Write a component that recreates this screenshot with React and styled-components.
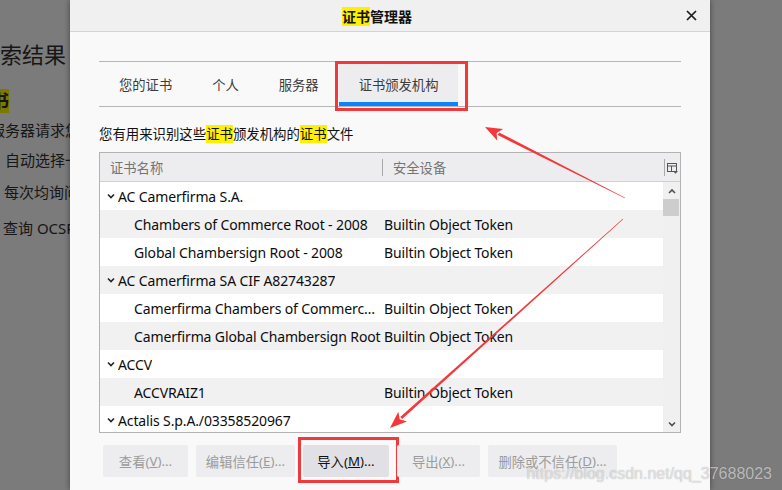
import React from "react";
import styled, { createGlobalStyle } from "styled-components";

const GlobalStyle = createGlobalStyle`
  html, body { margin: 0; padding: 0; }
  body {
    width: 782px;
    height: 490px;
    overflow: hidden;
    background: #7b7b7b;
    font-family: "Noto Sans", "Noto Sans CJK SC", sans-serif;
  }
`;

const rows = [
  { name: "AC Camerfirma S.A.", parent: true },
  { name: "Chambers of Commerce Root - 2008", device: "Builtin Object Token" },
  { name: "Global Chambersign Root - 2008", device: "Builtin Object Token" },
  { name: "AC Camerfirma SA CIF A82743287", parent: true },
  { name: "Camerfirma Chambers of Commerce Root", device: "Builtin Object Token" },
  { name: "Camerfirma Global Chambersign Root", device: "Builtin Object Token" },
  { name: "ACCV", parent: true },
  { name: "ACCVRAIZ1", device: "Builtin Object Token" },
  { name: "Actalis S.p.A./03358520967", parent: true },
];

const tabs = ["您的证书", "个人", "服务器", "证书颁发机构"];

const buttons = [
  { label: "查看", key: "V", w: 85 },
  { label: "编辑信任", key: "E", w: 99 },
  { label: "导入", key: "M", w: 86, enabled: true },
  { label: "导出", key: "X", w: 83 },
  { label: "删除或不信任", key: "D", w: 129 },
];

function arrow(x1, y1, x2, y2) {
  const dx = x2 - x1;
  const dy = y2 - y1;
  const len = Math.hypot(dx, dy);
  const ux = dx / len;
  const uy = dy / len;
  const nx = -uy;
  const ny = ux;
  const bx = x2 - ux * 15;
  const by = y2 - uy * 15;
  const p = (x, y) => `${x.toFixed(1)},${y.toFixed(1)}`;
  const shaft = [
    p(x1 + nx * 0.3, y1 + ny * 0.3),
    p(bx + nx * 1.5, by + ny * 1.5),
    p(bx - nx * 1.5, by - ny * 1.5),
    p(x1 - nx * 0.3, y1 - ny * 0.3),
  ].join(" ");
  const head = [
    p(x2, y2),
    p(bx - ux * 2 + nx * 6.5, by - uy * 2 + ny * 6.5),
    p(bx + ux * 2, by + uy * 2),
    p(bx - ux * 2 - nx * 6.5, by - uy * 2 - ny * 6.5),
  ].join(" ");
  return { shaft, head };
}

const Chevron = ({ up, color = "#222", w = 8 }) => (
  <svg width={w} height="6" viewBox="0 0 8 6">
    <polyline
      points={up ? "1,5 4,2 7,5" : "1,1.5 4,4.5 7,1.5"}
      fill="none"
      stroke={color}
      strokeWidth="1.6"
    />
  </svg>
);

const Arrows = () => {
  const a1 = arrow(625, 198, 485, 127);
  const a2 = arrow(623, 219, 390, 428);
  return (
    <Overlay width="782" height="490" viewBox="0 0 782 490">
      {[a1, a2].map((a, i) => (
        <g key={i} fill="#f2383b">
          <polygon points={a.shaft} />
          <polygon points={a.head} />
        </g>
      ))}
    </Overlay>
  );
};

export default function App() {
  return (
    <Page>
      <GlobalStyle />
      <BackPage>
        <BackTitle>搜索结果</BackTitle>
        <BackHeading>
          <Mark $dim>证书</Mark>
        </BackHeading>
        <BackLine $shift={-10}>服务器请求您的个人证书时</BackLine>
        <BackLine $shift={5} $top={10}>自动选择一个</BackLine>
        <BackLine $shift={4} $top={12}>每次均询问</BackLine>
        <BackLine $shift={3} $top={16}>查询 OCSP 响应服务器</BackLine>
      </BackPage>

      <Dialog>
        <TitleBar>
          <span />
          <Title>
            <Mark>证书</Mark>管理器
          </Title>
          <Close>
            <svg width="11" height="11" viewBox="0 0 11 11">
              <path d="M1 1L10 10M10 1L1 10" stroke="#1b1b1b" strokeWidth="1.7" />
            </svg>
          </Close>
        </TitleBar>

        <Body>
          <Tabs>
            {tabs.map((t, i) => (
              <Tab key={t} $selected={i === tabs.length - 1}>
                {t}
                {i === tabs.length - 1 && (
                  <RedBox $t={-1} $r={-10} $b={-5} $l={-4} />
                )}
              </Tab>
            ))}
          </Tabs>

          <Description>
            您有用来识别这些<Mark>证书</Mark>颁发机构的<Mark>证书</Mark>文件
          </Description>

          <Tree>
            <TreeHead>
              <HeadCell $w={282}>证书名称</HeadCell>
              <HeadDivider />
              <HeadCell $grow>安全设备</HeadCell>
              <HeadDivider />
              <Picker>
                <svg width="11" height="11" viewBox="0 0 11 11">
                  <rect x="0.5" y="0.5" width="9" height="8" fill="none" stroke="#555" />
                  <path d="M0.5 3H9.5M4.5 3V8.5" stroke="#555" />
                  <path d="M6 8H11L8.5 10.8Z" fill="#555" />
                </svg>
              </Picker>
            </TreeHead>
            <TreeBody>
              <RowList>
                {rows.map((r, i) => (
                  <Row key={r.name} $alt={i % 2 === 1}>
                    <NameCell $child={!r.parent}>
                      {r.parent && <Chevron />}
                      <Ellipsis>{r.name}</Ellipsis>
                    </NameCell>
                    <DeviceCell>{r.device}</DeviceCell>
                  </Row>
                ))}
              </RowList>
              <ScrollBar>
                <ScrollArrow>
                  <Chevron up color="#505050" />
                </ScrollArrow>
                <Thumb />
                <Track />
                <ScrollArrow>
                  <Chevron color="#505050" />
                </ScrollArrow>
              </ScrollBar>
            </TreeBody>
          </Tree>

          <Buttons>
            {buttons.map((b) => (
              <Button key={b.key} $w={b.w} $enabled={b.enabled}>
                {b.label}(<u>{b.key}</u>)...
                {b.enabled && <RedBox $t={-8} $r={-10} $b={-6} $l={-5} />}
              </Button>
            ))}
          </Buttons>
        </Body>
      </Dialog>

      <RightPage />
      <Arrows />
      <Watermark>https://blog.csdn.net/qq_37688023</Watermark>
    </Page>
  );
}

const Page = styled.div`
  position: relative;
  display: flex;
  width: 782px;
  height: 490px;
  overflow: hidden;
  background: #7b7b7b;
`;

const BackPage = styled.div`
  width: 70px;
  flex: none;
  overflow: hidden;
  white-space: nowrap;
  color: #161616;
  padding-top: 38px;
  box-sizing: border-box;
`;

const BackTitle = styled.div`
  font-size: 22px;
  line-height: 32px;
  margin-left: -22px;
`;

const BackHeading = styled.div`
  font-size: 18px;
  font-weight: 700;
  line-height: 22px;
  margin: 20px 0 0 -27px;
`;

const BackLine = styled.div`
  font-size: 15px;
  line-height: 20px;
  margin-top: ${(p) => p.$top ?? 8}px;
  margin-left: ${(p) => p.$shift}px;
`;

const Mark = styled.span`
  background: ${(p) => (p.$dim ? "#7d7800" : "#fff000")};
`;

const Dialog = styled.div`
  width: 640px;
  flex: none;
  background: #f9f9f9;
  display: flex;
  flex-direction: column;
  box-shadow: 0 0 6px rgba(0, 0, 0, 0.45);
  z-index: 1;
`;

const TitleBar = styled.div`
  height: 31px;
  background: #f0f0f0;
  border-bottom: 1px solid #d4d4d4;
  display: grid;
  grid-template-columns: 1fr auto 1fr;
  align-items: center;
`;

const Title = styled.div`
  margin-right: 26px;
  font-size: 14px;
  font-weight: 700;
  color: #111;
`;

const Close = styled.div`
  justify-self: end;
  padding-right: 13px;
  display: flex;
`;

const Body = styled.div`
  padding: 0 29px;
  display: flex;
  flex-direction: column;
`;

const Tabs = styled.div`
  margin-top: 29px;
  height: 44px;
  display: flex;
  border-top: 1px solid #b6b6b6;
  border-bottom: 1px solid #b6b6b6;
`;

const Tab = styled.div`
  position: relative;
  display: flex;
  align-items: center;
  padding: 0 20px;
  font-size: 13.3px;
  color: #3c3c3c;
  background: ${(p) => (p.$selected ? "#ededf0" : "transparent")};
  box-shadow: ${(p) => (p.$selected ? "inset 0 -4px 0 #0a84ff" : "none")};
`;

const RedBox = styled.div`
  position: absolute;
  top: ${(p) => p.$t}px;
  right: ${(p) => p.$r}px;
  bottom: ${(p) => p.$b}px;
  left: ${(p) => p.$l}px;
  border: 3px solid #f2383b;
  pointer-events: none;
`;

const Description = styled.div`
  margin-top: 19px;
  font-size: 13.4px;
  line-height: 17px;
  color: #111;
`;

const Tree = styled.div`
  margin-top: 9px;
  border: 1px solid #b3b3b3;
  background: #fff;
`;

const TreeHead = styled.div`
  height: 28px;
  display: flex;
  align-items: center;
  background: #ededf0;
  border-bottom: 1px solid #cfcfd4;
`;

const HeadCell = styled.div`
  width: ${(p) => (p.$w ? `${p.$w}px` : "auto")};
  flex: ${(p) => (p.$grow ? 1 : "none")};
  padding-left: 10px;
  box-sizing: border-box;
  font-size: 13.3px;
  color: #737373;
`;

const HeadDivider = styled.div`
  width: 1px;
  height: 17px;
  background: #a9a9a9;
`;

const Picker = styled.div`
  width: 15px;
  display: flex;
  justify-content: center;
  padding-top: 2px;
`;

const TreeBody = styled.div`
  height: 250px;
  display: flex;
`;

const RowList = styled.div`
  flex: 1;
  overflow: hidden;
`;

const Row = styled.div`
  height: 28px;
  display: flex;
  align-items: center;
  background: ${(p) => (p.$alt ? "#f1f1f1" : "#fff")};
  font-size: 14px;
  letter-spacing: -0.13px;
  color: #0c0c0d;
`;

const NameCell = styled.div`
  width: 284px;
  flex: none;
  display: flex;
  align-items: center;
  gap: 3px;
  padding: 0 3px 0 ${(p) => (p.$child ? 34 : 7)}px;
  box-sizing: border-box;
  overflow: hidden;
`;

const Ellipsis = styled.span`
  white-space: nowrap;
  overflow: hidden;
  text-overflow: ellipsis;
`;

const DeviceCell = styled.div`
  flex: 1;
  white-space: nowrap;
`;

const ScrollBar = styled.div`
  width: 17px;
  background: #f0f0f0;
  display: flex;
  flex-direction: column;
`;

const ScrollArrow = styled.div`
  height: 17px;
  display: flex;
  align-items: center;
  justify-content: center;
`;

const Thumb = styled.div`
  height: 17px;
  margin-right: 1px;
  background: #cdcdcd;
`;

const Track = styled.div`
  flex: 1;
`;

const Buttons = styled.div`
  margin-top: 12px;
  padding-left: 4px;
  display: flex;
  gap: 8px;
`;

const Button = styled.div`
  position: relative;
  width: ${(p) => p.$w}px;
  height: 32px;
  flex: none;
  display: flex;
  align-items: center;
  justify-content: center;
  border-radius: 2px;
  font-size: 13.3px;
  white-space: nowrap;
  background: ${(p) => (p.$enabled ? "#e1e1e5" : "#ededef")};
  color: ${(p) => (p.$enabled ? "#111" : "#9b9b9b")};
`;

const RightPage = styled.div`
  flex: 1;
  background: #7b7b7b;
`;

const Overlay = styled.svg`
  position: absolute;
  left: 0;
  top: 0;
  pointer-events: none;
  z-index: 2;
`;

const Watermark = styled.div`
  position: absolute;
  right: 10px;
  bottom: 7px;
  z-index: 3;
  font-family: "Liberation Sans", Arial, sans-serif;
  font-size: 16px;
  color: rgba(255, 255, 255, 0.6);
  text-shadow: 0 0 1px rgba(0, 0, 0, 0.35);
  pointer-events: none;
`;
